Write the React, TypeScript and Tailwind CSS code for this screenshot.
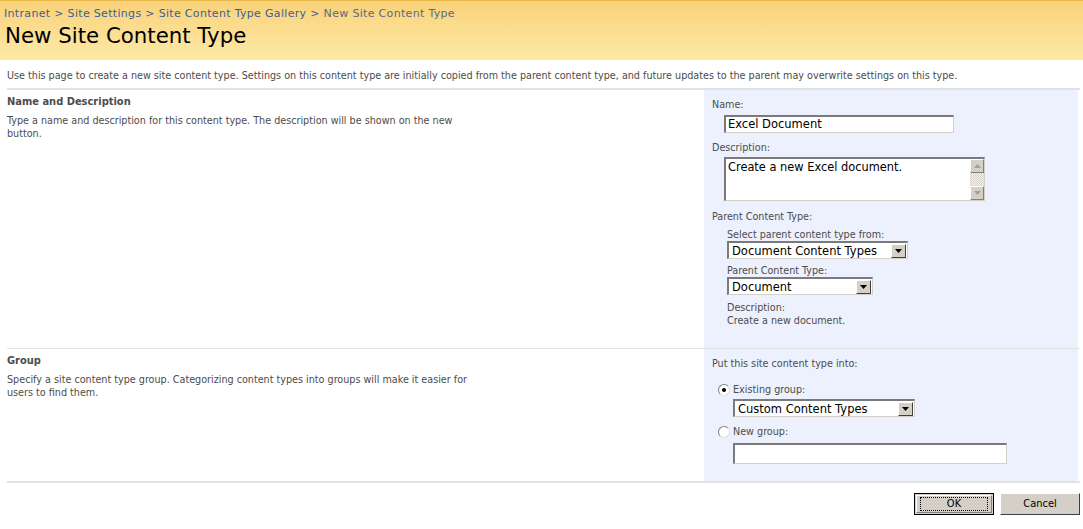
import React from "react";

const body = { fontFamily: '"DejaVu Sans Condensed", "DejaVu Sans", sans-serif' } as React.CSSProperties;
const verd = { fontFamily: '"DejaVu Sans", Verdana, sans-serif' } as React.CSSProperties;

function Sunken({ className, children }: { className?: string; children?: React.ReactNode }) {
  return (
    <div className={"border-t-2 border-l-2 border-t-[#7a7a7a] border-l-[#7a7a7a] border-b border-r border-b-[#d4d0c8] border-r-[#d4d0c8] bg-white " + (className ?? "")}>
      {children}
    </div>
  );
}

function DownArrow() {
  return (
    <svg width="7" height="4" viewBox="0 0 7 4">
      <path d="M0 0h7L3.5 4z" fill="#000" />
    </svg>
  );
}

function Select({ value, w }: { value: string; w: string }) {
  return (
    <Sunken className={"flex h-[18px] items-center " + w}>
      <span className="flex-1 pl-[3px] text-[11.5px] leading-[14px] text-black" style={verd}>{value}</span>
      <div className="mr-[1px] flex h-[14px] w-[15px] items-center justify-center border border-t-white border-l-white border-b-[#404040] border-r-[#404040] bg-[#d4d0c8]">
        <DownArrow />
      </div>
    </Sunken>
  );
}

function Radio({ checked }: { checked?: boolean }) {
  return (
    <div className="flex h-[12px] w-[12px] items-center justify-center rounded-full border border-t-[#808080] border-l-[#808080] border-b-[#e0e0e0] border-r-[#e0e0e0] bg-white">
      {checked && <div className="h-[4px] w-[4px] rounded-full bg-black" />}
    </div>
  );
}

export default function App() {
  return (
    <div className="w-[1083px] h-[529px] bg-white text-[#4c4c4c]" style={body}>
      <div className="h-[60px] border-t border-t-[#e8b84a] bg-gradient-to-b from-[#f9d27a] to-[#fee9a6]">
        <div className="pl-[4px] pt-[6px] text-[11px] leading-[14px] tracking-[0.32px] text-[#3b5f93]" style={verd}>
          Intranet &gt; Site Settings &gt; Site Content Type Gallery &gt; <span className="text-[#5b6a7c]">New Site Content Type</span>
        </div>
        <div className="pl-[5px] pt-[3px] text-[21.3px] leading-[24px] text-black" style={verd}>New Site Content Type</div>
      </div>

      <div className="pl-[7px] pr-[3px]">
        <div className="pt-[9px] text-[10.7px] leading-[13px]">
          Use this page to create a new site content type. Settings on this content type are initially copied from the parent content type, and future updates to the parent may overwrite settings on this type.
        </div>
        <div className="mt-[6px] h-[2px] bg-[#e2e2e2]" />

        {/* Row 1 */}
        <div className="flex h-[258px]">
          <div className="flex-1 pt-[5px] text-[10.7px] leading-[13px]">
            <div className="font-bold text-[11px]">Name and Description</div>
            <div className="mt-[6px] w-[460px]">Type a name and description for this content type. The description will be shown on the new button.</div>
          </div>
          <div className="mr-[2px] w-[374px] bg-[#edf1fd] pl-[8px] pt-[8px] text-[10.7px] leading-[13px]">
            <div>Name:</div>
            <div className="pl-[12px] pt-[4px]">
              <Sunken className="h-[18px] w-[230px] pl-[2px] text-[11.5px] leading-[15px] text-black">
                <span style={verd}>Excel Document</span>
              </Sunken>
            </div>
            <div className="mt-[8px]">Description:</div>
            <div className="pl-[12px] pt-[3px]">
              <Sunken className="flex h-[44px] w-[261px]">
                <div className="flex-1 pl-[2px] pt-[1px] text-[11.4px] leading-[15px] text-black" style={verd}>Create a new Excel document.</div>
                <div className="flex w-[14px] flex-col bg-[repeating-conic-gradient(#d4d0c8_0_25%,#f4f3ef_0_50%)] bg-[length:2px_2px]">
                  <div className="flex h-[14px] items-center justify-center border border-t-white border-l-white border-b-[#808080] border-r-[#808080] bg-[#d4d0c8]">
                    <svg width="7" height="4" viewBox="0 0 7 4"><path d="M0 4h7L3.5 0z" fill="#a0a0a0" /></svg>
                  </div>
                  <div className="flex-1" />
                  <div className="flex h-[14px] items-center justify-center border border-t-white border-l-white border-b-[#808080] border-r-[#808080] bg-[#d4d0c8]">
                    <svg width="7" height="4" viewBox="0 0 7 4"><path d="M0 0h7L3.5 4z" fill="#a0a0a0" /></svg>
                  </div>
                </div>
              </Sunken>
            </div>
            <div className="mt-[9px]">Parent Content Type:</div>
            <div className="pl-[15px] pt-[6px]">
              <div className="leading-[12px]">Select parent content type from:</div>
              <div><Select value="Document Content Types" w="w-[181px]" /></div>
              <div className="mt-[6px] leading-[12px]">Parent Content Type:</div>
              <div><Select value="Document" w="w-[146px]" /></div>
              <div className="mt-[6px]">Description:</div>
              <div>Create a new document.</div>
            </div>
          </div>
        </div>
        <div className="h-[1px] bg-[#e2e2e2]" />

        {/* Row 2 */}
        <div className="flex h-[132px]">
          <div className="flex-1 pt-[5px] text-[10.7px] leading-[13px]">
            <div className="font-bold text-[11px]">Group</div>
            <div className="mt-[6px] w-[460px]">Specify a site content type group. Categorizing content types into groups will make it easier for users to find them.</div>
          </div>
          <div className="mr-[2px] w-[374px] bg-[#edf1fd] pl-[8px] pt-[8px] text-[10.7px] leading-[13px]">
            <div>Put this site content type into:</div>
            <div className="flex items-center gap-[3px] pl-[6px] pt-[13px]">
              <Radio checked />
              <span>Existing group:</span>
            </div>
            <div className="pl-[21px] pt-[3px]"><Select value="Custom Content Types" w="w-[182px]" /></div>
            <div className="flex items-center gap-[3px] pl-[6px] pt-[8px]">
              <Radio />
              <span>New group:</span>
            </div>
            <div className="pl-[21px] pt-[5px]">
              <Sunken className="h-[21px] w-[274px]" />
            </div>
          </div>
        </div>
        <div className="h-[2px] bg-[#e2e2e2]" />

        <div className="flex justify-end gap-[6px] pt-[10px]">
          <button className="h-[22px] w-[80px] border border-black bg-[#d4d0c8] p-[1px] text-[11px] text-black">
            <div className="flex h-full w-full items-center justify-center border border-t-white border-l-white border-b-[#808080] border-r-[#808080]">
              <div className="flex h-[14px] w-[68px] items-center justify-center border border-dotted border-black">OK</div>
            </div>
          </button>
          <button className="h-[22px] w-[80px] border border-t-white border-l-white border-b-[#404040] border-r-[#404040] bg-[#d4d0c8] text-[11px] text-black">
            Cancel
          </button>
        </div>
      </div>
    </div>
  );
}
